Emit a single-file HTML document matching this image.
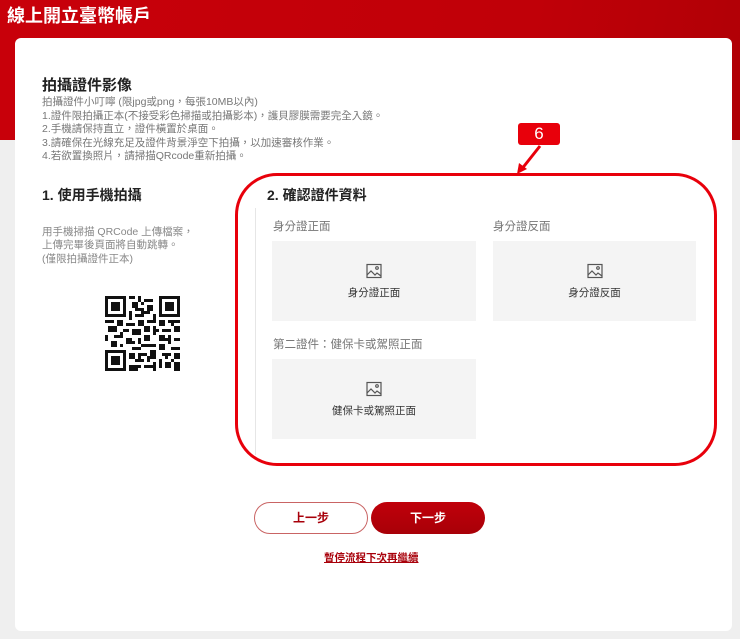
<!DOCTYPE html>
<html><head><meta charset="utf-8"><style>
*{margin:0;padding:0;box-sizing:border-box}
body{width:740px;height:639px;background:#efefef;position:relative;overflow:hidden;font-family:"Liberation Sans","Noto Sans CJK TC",sans-serif}
.hdr{position:absolute;left:0;top:0;width:740px;height:140px;background:linear-gradient(100deg,#c8000a 0%,#c00008 70%,#b00006 100%)}
.hdr h1{position:absolute;left:7px;top:3px;color:#fff;font-size:18px;font-weight:bold;line-height:26px}
.card{position:absolute;left:15px;top:38px;width:717px;height:593px;background:#fff;border-radius:6px}
.a{position:absolute;white-space:nowrap}
.g{color:#777;font-size:10.5px;line-height:13.6px}
.box{position:absolute;background:#f4f4f4;width:204px;height:80px;text-align:center}
.box svg{position:absolute;left:94px;top:22px}
.box span{position:absolute;left:0;right:0;top:45px;font-size:10.5px;color:#333;line-height:14px}
.lab{font-size:11.5px;color:#777;line-height:14px}
</style></head><body>
<div class="hdr"><h1>線上開立臺幣帳戶</h1></div>
<div class="card"></div>
<div class="a" style="left:42px;top:77px;font-size:15px;font-weight:bold;color:#222;line-height:18px">拍攝證件影像</div>
<div class="a g" style="left:42px;top:96px">拍攝證件小叮嚀 (限jpg或png，每張10MB以內)<br>1.證件限拍攝正本(不接受彩色掃描或拍攝影本)，護貝膠膜需要完全入鏡。<br>2.手機請保持直立，證件橫置於桌面。<br>3.請確保在光線充足及證件背景淨空下拍攝，以加速審核作業。<br>4.若欲置換照片，請掃描QRcode重新拍攝。</div>
<div class="a" style="left:42px;top:186px;font-size:14px;font-weight:bold;color:#222;line-height:18px">1. 使用手機拍攝</div>
<div class="a g" style="left:42px;top:226px;line-height:13.3px;color:#888">用手機掃描 QRCode 上傳檔案，<br>上傳完畢後頁面將自動跳轉。<br>(僅限拍攝證件正本)</div>
<svg class="a" style="left:105px;top:296px" width="75" height="75" viewBox="0 0 25 25" shape-rendering="crispEdges">
<rect width="25" height="25" fill="#fff"/>
<g fill="#111">
<rect x="0" y="0" width="7" height="7"/><rect x="18" y="0" width="7" height="7"/><rect x="0" y="18" width="7" height="7"/>
</g><g fill="#fff"><rect x="1" y="1" width="5" height="5"/><rect x="19" y="1" width="5" height="5"/><rect x="1" y="19" width="5" height="5"/></g>
<g fill="#111"><rect x="2" y="2" width="3" height="3"/><rect x="20" y="2" width="3" height="3"/><rect x="2" y="20" width="3" height="3"/>
<path d="M8 0h2v1h-2zM11 0h1v2h-1zM13 1h3v1h-3zM9 2h2v2h-2zM14 3h2v2h-2zM8 5h1v3h-1zM12 4h1v3h-1zM16 6h1v2h-1zM10 6h2v1h-2zM0 8h3v1h-3zM4 8h2v2h-2zM7 9h3v1h-3zM11 8h2v2h-2zM14 8h3v1h-3zM18 8h2v2h-2zM21 8h4v1h-4zM1 10h2v2h-2zM6 11h2v1h-2zM9 11h3v2h-3zM13 10h2v2h-2zM16 10h1v3h-1zM19 11h3v1h-3zM23 10h2v2h-2zM0 13h1v2h-1zM3 13h3v1h-3zM7 14h2v2h-2zM11 14h1v2h-1zM13 13h2v2h-2zM18 13h2v2h-2zM21 13h1v3h-1zM23 14h2v1h-2zM2 15h2v2h-2zM5 16h1v1h-1zM9 17h3v1h-3zM14 16h3v1h-3zM18 16h2v2h-2zM22 17h3v1h-3zM8 19h2v2h-2zM12 19h2v1h-2zM15 18h2v3h-2zM19 19h3v1h-3zM23 19h2v2h-2zM10 21h3v1h-3zM18 21h1v3h-1zM20 22h2v2h-2zM8 23h3v2h-3zM13 23h3v1h-3zM16 22h1v3h-1zM23 22h2v3h-2zM9 3h1v1h-1zM12 2h1v1h-1zM10 4h2v1h-2zM13 5h2v1h-2zM3 10h1v2h-1zM5 12h1v1h-1zM17 11h1v1h-1zM22 9h1v1h-1zM20 14h1v1h-1zM12 16h2v1h-2zM9 15h1v1h-1zM11 19h1v2h-1zM14 20h1v2h-1zM20 20h1v1h-1zM22 21h1v1h-1zM11 23h1v1h-1z"/></g>
</svg>
<div class="a" style="left:255px;top:208px;width:1px;height:247px;background:#e6e6e6"></div>
<div class="a" style="left:267px;top:186px;font-size:14px;font-weight:bold;color:#222;line-height:18px">2. 確認證件資料</div>
<div class="a lab" style="left:273px;top:220px">身分證正面</div>
<div class="a lab" style="left:493px;top:220px">身分證反面</div>
<div class="a lab" style="left:273px;top:338px">第二證件：健保卡或駕照正面</div>
<div class="box" style="left:272px;top:241px"><svg width="16" height="16" viewBox="0 0 16 16" fill="none" stroke="#555" stroke-width="1.2"><rect x="1" y="1.5" width="14" height="13"/><path d="M1 12l4-4 4 4 2-2 4 3"/><circle cx="11" cy="5" r="1.3"/></svg><span>身分證正面</span></div>
<div class="box" style="left:493px;top:241px;width:203px"><svg width="16" height="16" viewBox="0 0 16 16" fill="none" stroke="#555" stroke-width="1.2"><rect x="1" y="1.5" width="14" height="13"/><path d="M1 12l4-4 4 4 2-2 4 3"/><circle cx="11" cy="5" r="1.3"/></svg><span>身分證反面</span></div>
<div class="box" style="left:272px;top:359px"><svg width="16" height="16" viewBox="0 0 16 16" fill="none" stroke="#555" stroke-width="1.2"><rect x="1" y="1.5" width="14" height="13"/><path d="M1 12l4-4 4 4 2-2 4 3"/><circle cx="11" cy="5" r="1.3"/></svg><span>健保卡或駕照正面</span></div>
<div class="a" style="left:235px;top:173px;width:482px;height:293px;border:3px solid #e8000b;border-radius:42px"></div>
<div class="a" style="left:518px;top:123px;width:42px;height:22px;background:#e8000b;border-radius:3px;color:#fff;font-size:17px;text-align:center;line-height:22px">6</div>
<svg class="a" style="left:510px;top:140px" width="40" height="40"><path d="M30 6L11 30" stroke="#e8000b" stroke-width="3"/><path d="M7 34l2-11 8 6z" fill="#e8000b"/></svg>
<div class="a" style="left:254px;top:502px;width:114px;height:32px;border:1px solid #c96464;border-radius:16px;color:#a8000a;font-size:12px;font-weight:bold;text-align:center;line-height:30px">上一步</div>
<div class="a" style="left:371px;top:502px;width:114px;height:32px;background:linear-gradient(#c0000a,#a80008);border-radius:16px;color:#fff;font-size:12px;font-weight:bold;text-align:center;line-height:32px">下一步</div>
<div class="a" style="left:324px;top:551px;font-size:10.5px;font-weight:bold;color:#a8000a;text-decoration:underline;line-height:14px">暫停流程下次再繼續</div>
</body></html>
